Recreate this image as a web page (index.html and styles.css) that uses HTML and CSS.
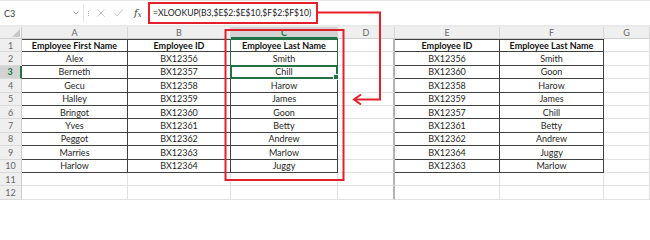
FILE: index.html
```html
<!DOCTYPE html>
<html>
<head>
<meta charset="utf-8">
<link rel="stylesheet" href="styles.css">
</head>
<body>
<div class="app">
  <div class="fbar">
    <div class="namebox"><span>C3</span>
      <svg class="caret" width="6" height="4" viewBox="0 0 6 4"><path d="M0.5 0.5 L3 3 L5.5 0.5" fill="none" stroke="#8a8a8a" stroke-width="0.9"/></svg>
    </div>
    <div class="vsep"><span></span><span></span><span></span></div>
    <div class="icons">
      <svg class="ic-x" width="8" height="8" viewBox="0 0 8 8"><path d="M0.5 0.5 L7.5 7.5 M7.5 0.5 L0.5 7.5" stroke="#c4c4c4" stroke-width="1" fill="none"/></svg>
      <svg class="ic-ok" width="9" height="8" viewBox="0 0 9 8"><path d="M0.5 4 L3.3 7 L8.5 0.5" stroke="#c4c4c4" stroke-width="1" fill="none"/></svg>
      <span class="fx">f<sub>x</sub></span>
    </div>
    <div class="formula">=XLOOKUP(B3,$E$2:$E$10,$F$2:$F$10)</div>
  </div>
  <div class="sheet">
    <div class="corner"><svg width="8" height="8" viewBox="0 0 8 8"><path d="M8 0 L8 8 L0 8 Z" fill="#c8c8c8"/></svg></div>
    <div class="ch">A</div><div class="ch">B</div><div class="ch ch-sel">C</div><div class="ch">D</div><div class="ch">E</div><div class="ch">F</div><div class="ch">G</div>

    <div class="rh">1</div>
    <div class="c t top hd">Employee First Name</div><div class="c t top hd">Employee ID</div><div class="c t top hd">Employee Last Name</div><div class="c dcol"></div><div class="c t top hd">Employee ID</div><div class="c t top hd">Employee Last Name</div><div class="c"></div>

    <div class="rh">2</div>
    <div class="c t">Alex</div><div class="c t">BX12356</div><div class="c t">Smith</div><div class="c dcol"></div><div class="c t">BX12356</div><div class="c t">Smith</div><div class="c"></div>

    <div class="rh rh-sel">3</div>
    <div class="c t">Berneth</div><div class="c t">BX12357</div><div class="c t">Chill</div><div class="c dcol"></div><div class="c t">BX12360</div><div class="c t">Goon</div><div class="c"></div>

    <div class="rh">4</div>
    <div class="c t">Gecu</div><div class="c t">BX12358</div><div class="c t">Harow</div><div class="c dcol"></div><div class="c t">BX12358</div><div class="c t">Harow</div><div class="c"></div>

    <div class="rh">5</div>
    <div class="c t">Halley</div><div class="c t">BX12359</div><div class="c t">James</div><div class="c dcol"></div><div class="c t">BX12359</div><div class="c t">James</div><div class="c"></div>

    <div class="rh">6</div>
    <div class="c t">Bringot</div><div class="c t">BX12360</div><div class="c t">Goon</div><div class="c dcol"></div><div class="c t">BX12357</div><div class="c t">Chill</div><div class="c"></div>

    <div class="rh">7</div>
    <div class="c t">Yves</div><div class="c t">BX12361</div><div class="c t">Betty</div><div class="c dcol"></div><div class="c t">BX12361</div><div class="c t">Betty</div><div class="c"></div>

    <div class="rh">8</div>
    <div class="c t">Peggot</div><div class="c t">BX12362</div><div class="c t">Andrew</div><div class="c dcol"></div><div class="c t">BX12362</div><div class="c t">Andrew</div><div class="c"></div>

    <div class="rh">9</div>
    <div class="c t">Marries</div><div class="c t">BX12363</div><div class="c t">Marlow</div><div class="c dcol"></div><div class="c t">BX12364</div><div class="c t">Juggy</div><div class="c"></div>

    <div class="rh">10</div>
    <div class="c t">Harlow</div><div class="c t">BX12364</div><div class="c t">Juggy</div><div class="c dcol"></div><div class="c t">BX12363</div><div class="c t">Marlow</div><div class="c"></div>

    <div class="rh">11</div>
    <div class="c"></div><div class="c"></div><div class="c"></div><div class="c dcol"></div><div class="c"></div><div class="c"></div><div class="c"></div>

    <div class="rh">12</div>
    <div class="c"></div><div class="c"></div><div class="c"></div><div class="c dcol"></div><div class="c"></div><div class="c"></div><div class="c"></div>

    <div class="sel-col"></div>
    <div class="sel-cell"></div>
  </div>
  <svg class="annot" width="650" height="203" viewBox="0 0 650 203">
    <rect x="149" y="3" width="168" height="20" fill="none" stroke="#e4212a" stroke-width="2"/>
    <rect x="225.5" y="30" width="118" height="150" fill="none" stroke="#e4212a" stroke-width="2"/>
    <path d="M317 12.5 L380 12.5 L380 99.5 L355 99.5" fill="none" stroke="#e4212a" stroke-width="2"/>
    <path d="M361 94.5 L354 99.5 L361 104.5" fill="none" stroke="#e4212a" stroke-width="2"/>
  </svg>
</div>
</body>
</html>
```
FILE: styles.css
```css
html, body {
  margin: 0;
  padding: 0;
}
body {
  width: 650px;
  height: 203px;
  overflow: hidden;
  background: #fff;
  font-family: Lato, "Liberation Sans", sans-serif;
}
.app {
  position: relative;
  width: 650px;
  height: 203px;
  overflow: hidden;
}
.fbar {
  display: flex;
  align-items: center;
  height: 27px;
  box-sizing: border-box;
  border-top: 1px solid #e4e4e4;
  border-bottom: 2px solid #e9e9e9;
  background: #fff;
}
.namebox {
  width: 84px;
  height: 18px;
  box-sizing: border-box;
  display: flex;
  align-items: center;
  justify-content: space-between;
  padding: 0 4px 0 4px;
  font-size: 9px;
  color: #3a3a3a;
  border-right: 1px solid #e6e6e6;
}
.caret {
  display: block;
}
.vsep {
  width: 8px;
  display: flex;
  flex-direction: column;
  align-items: center;
  gap: 1px;
}
.vsep span {
  width: 1px;
  height: 1px;
  background: #b8b8b8;
}
.icons {
  display: flex;
  align-items: center;
  padding-left: 5px;
  width: 56px;
  box-sizing: border-box;
}
.ic-x {
  display: block;
  margin-right: 9px;
}
.ic-ok {
  display: block;
  margin-right: 11px;
}
.fx {
  font-family: "DejaVu Serif", "Liberation Serif", serif;
  font-style: italic;
  font-size: 10px;
  color: #444;
  line-height: 1;
}
.fx sub {
  font-size: 7px;
  vertical-align: -1px;
}
.formula {
  padding-left: 5px;
  font-size: 8.6px;
  color: #222;
}
.sheet {
  position: relative;
  display: grid;
  grid-template-columns: 22px 106px 103px 107px 57px 105px 104px 46px;
  grid-template-rows: 12px repeat(12, 13.4px);
  font-size: 9px;
  color: #1f1f1f;
}
.corner {
  background: #efefef;
  border-right: 1px solid #cfcfcf;
  border-bottom: 1px solid #cfcfcf;
  box-sizing: border-box;
  display: flex;
  align-items: flex-end;
  justify-content: flex-end;
  padding: 1px;
}
.corner svg {
  display: block;
}
.ch {
  background: #efefef;
  border-right: 1px solid #d6d6d6;
  border-bottom: 1px solid #cfcfcf;
  box-sizing: border-box;
  display: flex;
  align-items: center;
  justify-content: center;
  color: #666;
  font-size: 9px;
}
.ch-sel {
  background: #d3d3d3;
  color: #217346;
  font-weight: 700;
  border-bottom: 2px solid #217346;
}
.rh {
  background: #efefef;
  border-right: 1px solid #cfcfcf;
  border-bottom: 1px solid #d9d9d9;
  box-sizing: border-box;
  display: flex;
  align-items: center;
  justify-content: center;
  color: #666;
  font-size: 9px;
}
.rh-sel {
  background: #d3d3d3;
  color: #217346;
  font-weight: 700;
  border-right: 2px solid #217346;
}
.c {
  border-right: 1px solid #e1e1e1;
  border-bottom: 1px solid #e1e1e1;
  box-sizing: border-box;
  display: flex;
  align-items: center;
  justify-content: center;
  white-space: nowrap;
  overflow: hidden;
}
.c.dcol {
  border-right: 2px solid #b4b4b4;
}
.c.t {
  border-right: 1px solid #404040;
  border-bottom: 1px solid #404040;
}
.c.top {
  border-top: 1px solid #404040;
}
.c.hd {
  font-weight: 700;
  color: #111;
}
.sel-col {
  position: absolute;
  grid-column: 4 / 5;
  grid-row: 2 / 5;
  top: 0;
  bottom: 0;
  left: -1px;
  right: 0;
  border: 1px solid #217346;
  pointer-events: none;
}
.sel-cell {
  position: absolute;
  grid-column: 4 / 5;
  grid-row: 4 / 5;
  top: -1px;
  bottom: 0;
  left: -1px;
  right: 0;
  border: 2px solid #217346;
  pointer-events: none;
}
.sel-cell::after {
  content: "";
  position: absolute;
  right: -3px;
  bottom: -3px;
  width: 4px;
  height: 4px;
  background: #217346;
  border: 1px solid #fff;
}
.annot {
  position: absolute;
  left: 0;
  top: 0;
  pointer-events: none;
}
```
